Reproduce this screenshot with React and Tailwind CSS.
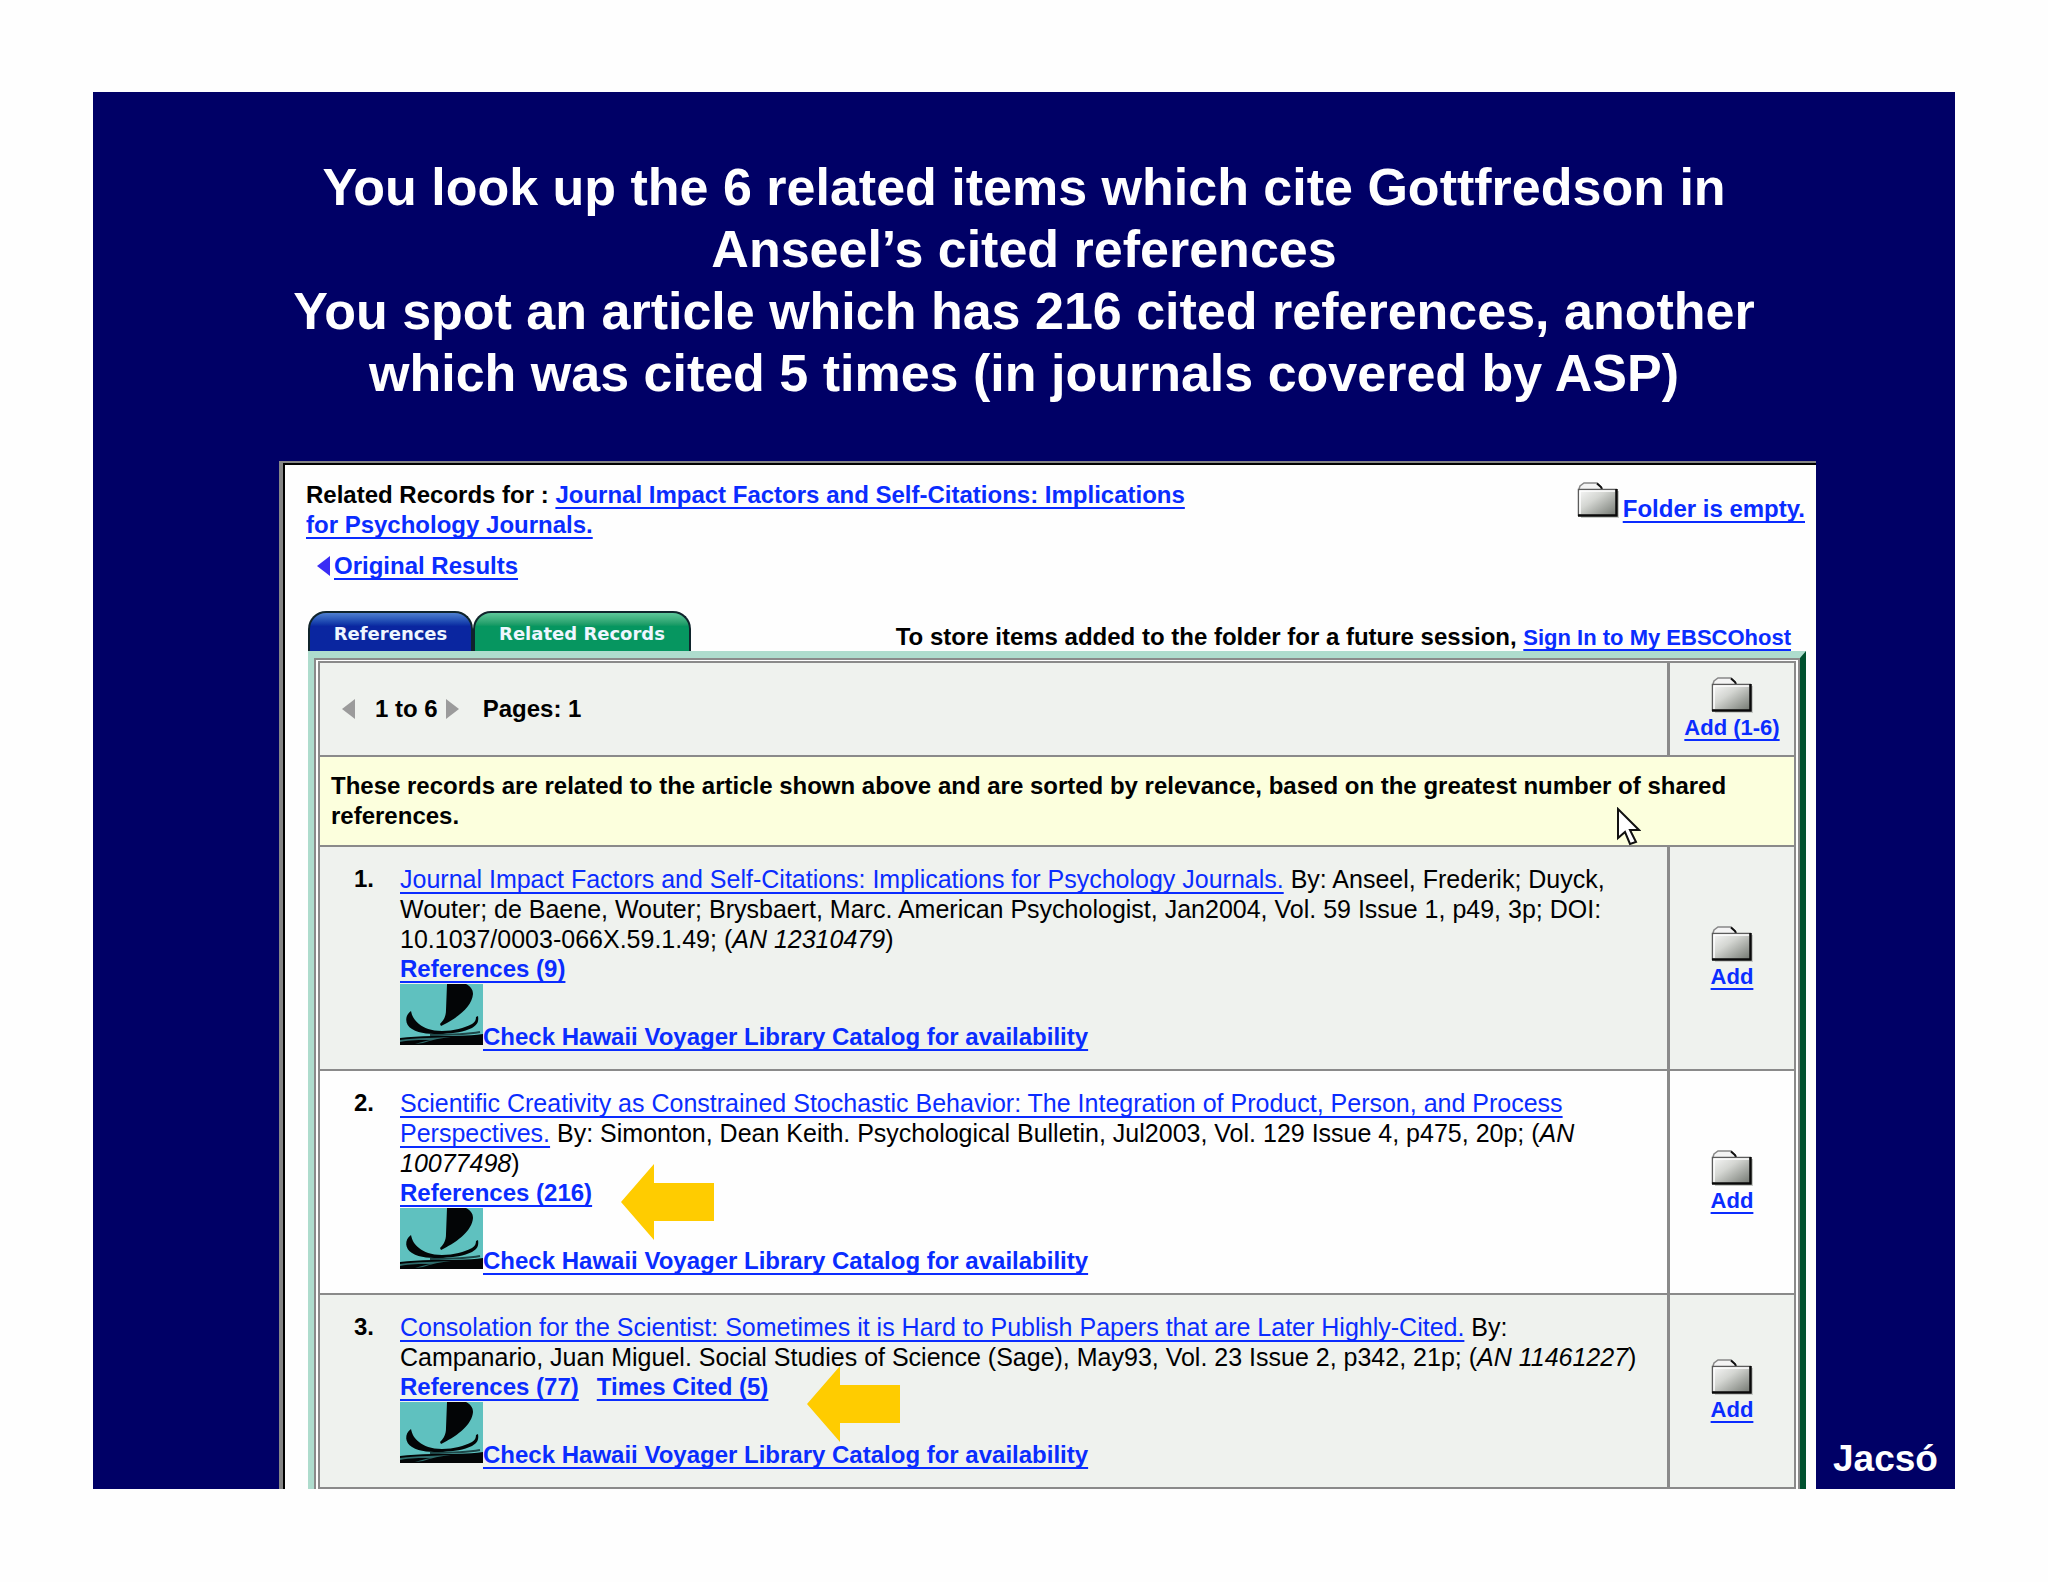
const records = [
  {
    title: ['Journal Impact Factors and Self-Citations: Implications for Psychology Journals.'],
    lines: ['By: Anseel, Frederik; Duyck,', 'Wouter; de Baene, Wouter; Brysbaert, Marc. American Psychologist, Jan2004, Vol. 59 Issue 1, p49, 3p; DOI:', '10.1037/0003-066X.59.1.49; ('],
    accession: ['AN 12310479'],
    links: ['References (9)'],
    row: 'h-[224px] bg-[#eff2ee]',
  },
  {
    title: ['Scientific Creativity as Constrained Stochastic Behavior: The Integration of Product, Person, and Process', 'Perspectives.'],
    lines: ['By: Simonton, Dean Keith. Psychological Bulletin, Jul2003, Vol. 129 Issue 4, p475, 20p; ('],
    accession: ['AN', '10077498'],
    links: ['References (216)'],
    row: 'h-[224px] bg-[#fefefe]',
    arrow: 'left-[221px] top-[76px]',
  },
  {
    title: ['Consolation for the Scientist: Sometimes it is Hard to Publish Papers that are Later Highly-Cited.'],
    lines: ['By:', 'Campanario, Juan Miguel. Social Studies of Science (Sage), May93, Vol. 23 Issue 2, p342, 21p; ('],
    accession: ['AN 11461227'],
    links: ['References (77)', 'Times Cited (5)'],
    row: 'h-[194px] bg-[#eff2ee]',
    arrow: 'left-[407px] top-[54px]',
  },
];

function Link({ children, className = '' }) {
  return (
    <a
      href="#"
      className={`text-[#0a2cff] underline decoration-2 underline-offset-4 [text-decoration-skip-ink:none] ${className}`}
    >
      {children}
    </a>
  );
}

function Lines({ items }) {
  return items.map((item, i) => (
    <span key={item}>
      {i > 0 && <br />}
      {item}
    </span>
  ));
}

function FolderIcon() {
  return (
    <svg viewBox="0 0 42 36" className="w-[42px] h-9 shrink-0" aria-hidden="true">
      <defs>
        <linearGradient id="folder" x1="0" y1="0" x2="1" y2="1">
          <stop offset="0" stopColor="#fafafa" />
          <stop offset="0.4" stopColor="#d4d6d2" />
          <stop offset="1" stopColor="#6e736c" />
        </linearGradient>
      </defs>
      <path d="M4 35h37V9" fill="none" stroke="#c9ccc8" strokeWidth="2" />
      <path d="M2 7l1-3 4-3h13l4 4 1 2" fill="#f4f4f4" stroke="#888" strokeWidth="1.5" />
      <path d="M20 1.5l4 3.5 1 2" fill="none" stroke="#111" strokeWidth="2" />
      <rect x="1" y="7" width="39" height="27" fill="url(#folder)" />
      <path d="M1.5 34V7.5H40" fill="none" stroke="#5c5c5c" strokeWidth="1.5" />
      <path d="M3 32V9h35" fill="none" stroke="#fff" strokeWidth="1.5" />
      <path d="M1 33.5h38.5V7" fill="none" stroke="#0a0a0a" strokeWidth="2.5" />
    </svg>
  );
}

function CanoeLogo() {
  return (
    <svg viewBox="0 0 83 61" className="inline-block align-baseline w-[83px] h-[61px]" aria-hidden="true">
      <rect width="83" height="61" fill="#5fc1bf" />
      <path d="M47 0h19c4 2 7 5 7 10-1 12-14 23-30 31l-2 1-1-2c4-4 6-8 6-14z" fill="#030506" />
      <path
        d="M11 27c1 5 3 9 8 13s12 7 23 7c12 0 22-3 30-7 3-2 4-4 4-7l2-1c1 6-1 9-6 12-8 4-18 5-29 6-12 0-23 0-31-5-7-4-8-13-1-18z"
        fill="#030506"
      />
      <path d="M0 54c9-1 20-2 32-2 19 0 36 0 51-2v11H0z" fill="#030506" />
      <path d="M30 51c16 0 34 0 50-3" fill="none" stroke="#1d4647" strokeWidth="2" />
      <path d="M0 56c8-1 17-2 27-2l24-1c-10 1-20 3-28 6l-8 1c6-2 10-3 16-4-12 0-20 0-31 2z" fill="#2f6b6b" />
    </svg>
  );
}

function Arrow({ className }) {
  return (
    <svg viewBox="0 0 93 76" className={`absolute w-[93px] h-[76px] ${className}`} aria-hidden="true">
      <path d="M0 38L33 0v19h60v38H33v19z" fill="#fc0" />
    </svg>
  );
}

function Triangle({ d, className }) {
  return (
    <svg viewBox="0 0 13 20" className={`w-[13px] h-5 ${className}`} fill="currentColor" aria-hidden="true">
      <path d={d} />
    </svg>
  );
}

function AddCell({ label }) {
  return (
    <td className="w-[124px] border-b-2 border-[#8a8a8a] p-0 pt-0.5 align-middle">
      <div className="flex flex-col items-center">
        <FolderIcon />
        <Link className="text-[22px] leading-[30px] font-bold">{label}</Link>
      </div>
    </td>
  );
}

function RecordRow({ record, number }) {
  return (
    <tr className={record.row}>
      <td className="border-b-2 border-r-3 border-[#8a8a8a] p-0 pt-[17px] align-top">
        <div className="flex">
          <span className="w-[54px] shrink-0 text-right font-bold">{number}.</span>
          <div className="relative ml-[26px]">
            <p className="text-[25px]">
              <Link>
                <Lines items={record.title} />
              </Link>{' '}
              <Lines items={record.lines} />
              <i>
                <Lines items={record.accession} />
              </i>
              )
            </p>
            <p className="flex gap-[18px] font-bold">
              {record.links.map(link => (
                <Link key={link}>{link}</Link>
              ))}
            </p>
            <p className="font-bold">
              <CanoeLogo />
              <Link>Check Hawaii Voyager Library Catalog for availability</Link>
            </p>
            {record.arrow && <Arrow className={record.arrow} />}
          </div>
        </div>
      </td>
      <AddCell label="Add" />
    </tr>
  );
}

function Tab({ children, className }) {
  return (
    <button
      className={`h-10 rounded-t-[18px] border-2 border-b-0 border-[#10242c] pt-1 text-[18px] leading-6 font-bold text-[#eef6ff] font-['DejaVu_Sans',sans-serif] ${className}`}
    >
      {children}
    </button>
  );
}

function ResultsPanel() {
  return (
    <section className="flex-1 border-t-2 border-l-4 border-[#858585] text-[24px] leading-[30px] whitespace-nowrap text-black">
      <div className="h-full border-t-2 border-l-2 border-black bg-[#fefefe]">
        <div className="flex justify-between pt-[15px] pl-[21px] pr-[11px]">
          <div className="font-bold">
            <p>
              Related Records for :{' '}
              <Link>
                <Lines items={['Journal Impact Factors and Self-Citations: Implications', 'for Psychology Journals.']} />
              </Link>
            </p>
            <p className="mt-[11px] flex items-center gap-1 pl-[11px]">
              <Triangle d="M13 0v20L0 10z" className="text-[#3a2cf5]" />
              <Link>Original Results</Link>
            </p>
          </div>
          <div className="flex items-start gap-1 pt-0.5 font-bold">
            <FolderIcon />
            <Link className="pt-3">Folder is empty.</Link>
          </div>
        </div>

        <div className="mt-[30px] flex items-end justify-between pl-[23px] pr-[25px]">
          <div className="flex">
            <Tab className="w-[165px] bg-linear-to-b from-[#4f7fd0] from-0% to-[#0a26a0] to-35%">References</Tab>
            <Tab className="w-[218px] bg-linear-to-b from-[#5cc79a] from-0% to-[#069660] to-35%">Related Records</Tab>
          </div>
          <p className="leading-[26px] font-bold">
            To store items added to the folder for a future session,{' '}
            <Link className="text-[22px] underline-offset-3">Sign In to My EBSCOhost</Link>
          </p>
        </div>

        <div className="ml-[23px] mr-[10px] border-t-[7px] border-l-[6px] border-r-[6px] border-t-[#aedccd] border-l-[#aedccd] border-r-[#00512f]">
          <div className="border-2 border-b-0 border-[#8a8a8a] px-0.5 pt-px">
            <table className="w-full border-separate border-spacing-0 border-2 border-b-0 border-[#8a8a8a]">
              <tbody>
                <tr className="h-[94px] bg-[#eff2ee]">
                  <td className="border-b-2 border-r-3 border-[#8a8a8a] p-0 font-bold">
                    <div className="flex items-center pl-[22px]">
                      <Triangle d="M13 0v20L0 10z" className="text-[#9b9b9b]" />
                      <span className="ml-5">1 to 6</span>
                      <Triangle d="M0 0v20l13-10z" className="ml-2 text-[#9b9b9b]" />
                      <span className="ml-6">Pages: 1</span>
                    </div>
                  </td>
                  <AddCell label="Add (1-6)" />
                </tr>
                <tr className="h-[90px] bg-[#fcffdd]">
                  <td colSpan={2} className="relative border-b-2 border-[#8a8a8a] p-0 pt-3.5 pl-[11px] align-top font-bold">
                    These records are related to the article shown above and are sorted by relevance, based on the greatest number of shared
                    <br />
                    references.
                    <svg viewBox="0 0 24 39" className="absolute top-[50px] right-[153px] w-6 h-[39px]" aria-hidden="true">
                      <path
                        d="M1 2v29l7-6 5 12 6-2-6-12h9z"
                        fill="#fff"
                        stroke="#111"
                        strokeWidth="2"
                      />
                    </svg>
                  </td>
                </tr>
                {records.map((record, i) => (
                  <RecordRow key={record.title[0]} record={record} number={i + 1} />
                ))}
              </tbody>
            </table>
          </div>
        </div>
      </div>
    </section>
  );
}

export default function App() {
  return (
    <div className="min-h-screen bg-[#fefefe] px-[93px] py-[92px] font-['Liberation_Sans',Arial,sans-serif]">
      <main className="bg-[#000066] text-white">
        <h1 className="pt-16 pb-[57px] text-center text-[52px] leading-[62px] font-bold whitespace-nowrap">
          You look up the 6 related items which cite Gottfredson in
          <br />
          Anseel’s cited references
          <br />
          You spot an article which has 216 cited references, another
          <br />
          which was cited 5 times (in journals covered by ASP)
        </h1>
        <div className="flex pl-[186px]">
          <ResultsPanel />
          <p className="w-[139px] shrink-0 self-end pb-2 text-center text-[37px] leading-[44px] font-bold">Jacsó</p>
        </div>
      </main>
    </div>
  );
}
